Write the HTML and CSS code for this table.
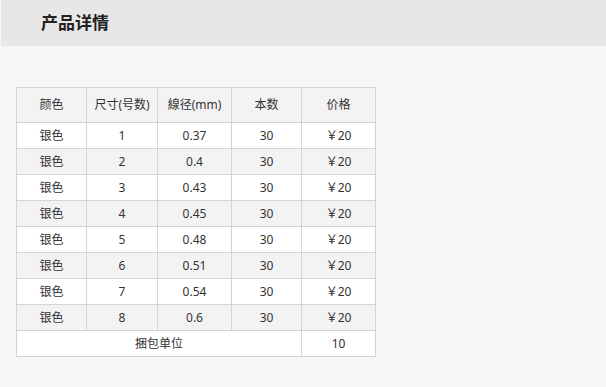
FILE: index.html
```html
<!DOCTYPE html>
<html lang="zh-CN">
<head>
<meta charset="utf-8">
<title>产品详情</title>
<link rel="stylesheet" href="styles.css">
</head>
<body>
<div class="page-header"><h1 class="page-title">产品详情</h1></div>
<div class="content">
<table class="spec-table">
<thead>
<tr><th class="c1">颜色</th><th class="c2">尺寸(号数)</th><th class="c3">線径(mm)</th><th class="c4">本数</th><th class="c5">价格</th></tr>
</thead>
<tbody>
<tr><td>银色</td><td>1</td><td>0.37</td><td>30</td><td>￥20</td></tr>
<tr class="alt"><td>银色</td><td>2</td><td>0.4</td><td>30</td><td>￥20</td></tr>
<tr><td>银色</td><td>3</td><td>0.43</td><td>30</td><td>￥20</td></tr>
<tr class="alt"><td>银色</td><td>4</td><td>0.45</td><td>30</td><td>￥20</td></tr>
<tr><td>银色</td><td>5</td><td>0.48</td><td>30</td><td>￥20</td></tr>
<tr class="alt"><td>银色</td><td>6</td><td>0.51</td><td>30</td><td>￥20</td></tr>
<tr><td>银色</td><td>7</td><td>0.54</td><td>30</td><td>￥20</td></tr>
<tr class="alt"><td>银色</td><td>8</td><td>0.6</td><td>30</td><td>￥20</td></tr>
<tr><td colspan="4">捆包单位</td><td>10</td></tr>
</tbody>
</table>
</div>
</body>
</html>
```
FILE: styles.css
```css
html, body {
  margin: 0;
  padding: 0;
  background: #f6f6f6;
  font-family: "Noto Sans", "Noto Sans CJK SC", sans-serif;
  color: #333;
}
.page-header {
  margin-left: 1px;
  height: 46px;
  background: #e7e7e7;
  padding-left: 40px;
  display: flex;
  align-items: center;
}
.page-title {
  margin: 0;
  font-size: 17px;
  font-weight: bold;
  color: #222;
  font-family: "Noto Sans CJK SC", sans-serif;
  line-height: 20px;
  margin-top: -3px;
}
.content {
  padding: 41px 0 0 16px;
}
.spec-table {
  border-collapse: separate;
  border-spacing: 0;
  table-layout: fixed;
  border-left: 1px solid #d4d4d4;
  border-top: 1px solid #d4d4d4;
  font-size: 12px;
}
.spec-table th, .spec-table td {
  padding: 0;
  border-right: 1px solid #d4d4d4;
  border-bottom: 1px solid #d4d4d4;
  text-align: center;
  font-weight: normal;
  color: #333;
  background: #fff;
}
.spec-table th {
  background: #f3f3f3;
  height: 34px;
  line-height: 34px;
}
.spec-table td {
  height: 25px;
  line-height: 25px;
}
.spec-table tr.alt td {
  background: #f3f3f3;
}
.c1 { width: 69px; }
.c2 { width: 70px; }
.c3 { width: 73px; }
.c4 { width: 69px; }
.c5 { width: 73px; }
```
